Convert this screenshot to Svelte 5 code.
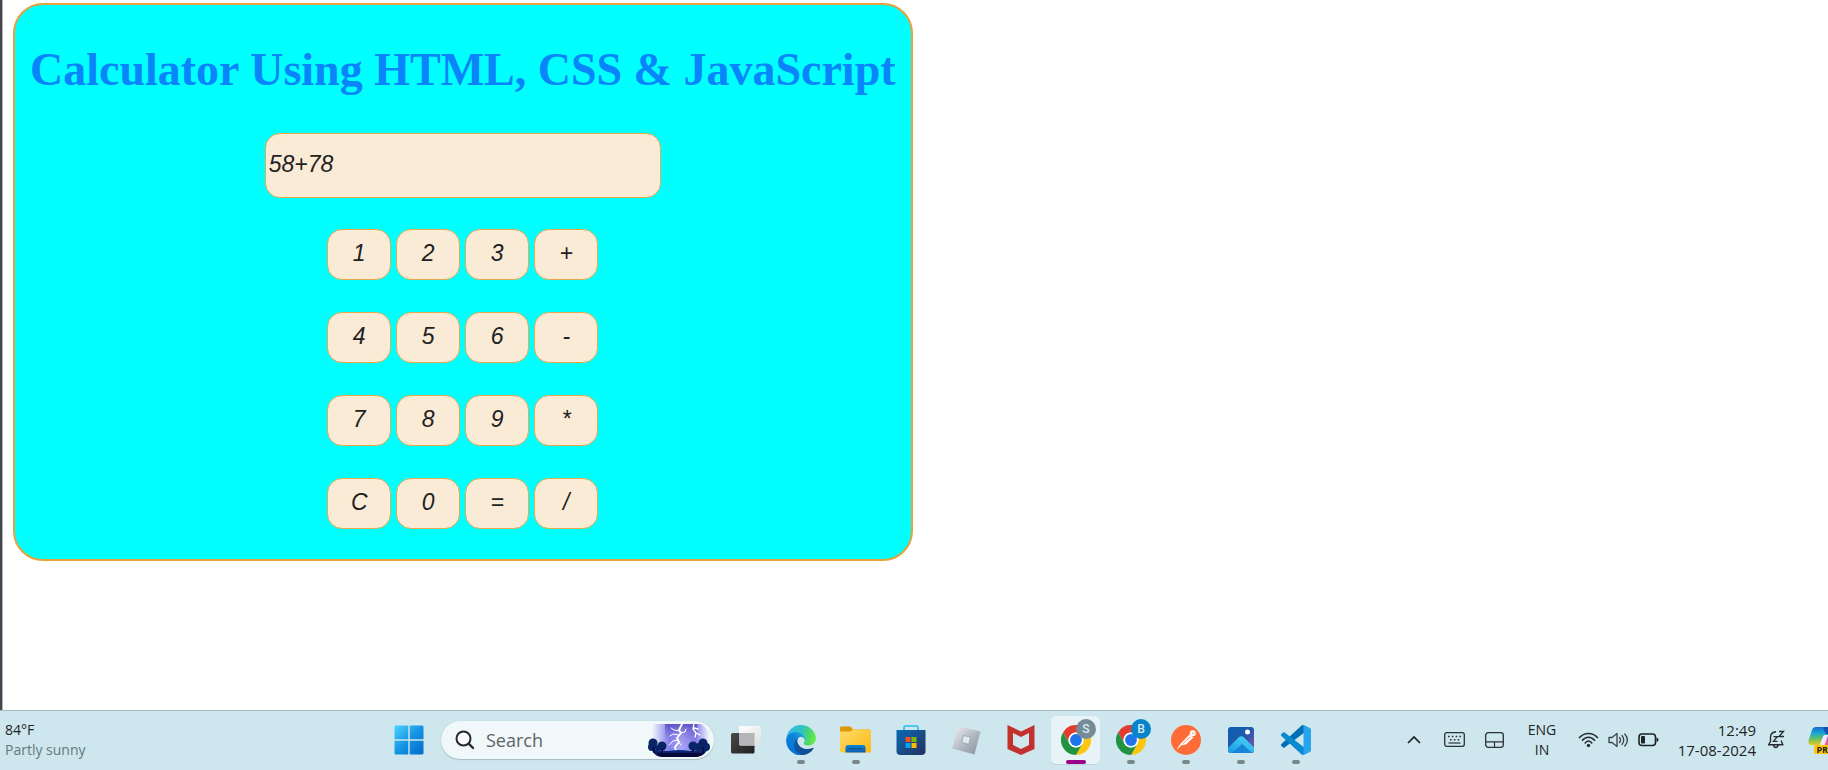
<script>
  const rows = [
    ['1', '2', '3', '+'],
    ['4', '5', '6', '-'],
    ['7', '8', '9', '*'],
    ['C', '0', '=', '/']
  ];

  let display = $state('58+78');

  // Evaluates + - * / with the usual precedence.
  function evaluate(text) {
    const tokens = text.match(/\d+\.?\d*|[-+*/]/g) ?? [];
    const terms = [];
    let op = '+';
    for (const token of tokens) {
      if (/^[-+*/]$/.test(token)) {
        op = token;
        continue;
      }
      const n = Number(token);
      if (op === '+') terms.push(n);
      else if (op === '-') terms.push(-n);
      else if (op === '*') terms.push((terms.pop() ?? 0) * n);
      else terms.push((terms.pop() ?? 0) / n);
    }
    return String(terms.reduce((a, b) => a + b, 0));
  }

  function press(key) {
    if (key === 'C') display = '';
    else if (key === '=') display = evaluate(display);
    else display += key;
  }
</script>

{#snippet chrome()}
  <svg width="30" height="30" viewBox="0 0 48 48" aria-hidden="true">
    <path fill="#e33b2e" d="M13.6 30 3.2 12A24 24 0 0 1 44.8 12H24A12 12 0 0 0 13.6 30z" />
    <path fill="#fcc60e" d="M34.4 30 24 48A24 24 0 0 0 44.8 12H24A12 12 0 0 1 34.4 30z" />
    <path fill="#229342" d="M13.6 30 3.2 12A24 24 0 0 0 24 48L34.4 30A12 12 0 0 1 13.6 30z" />
    <circle cx="24" cy="24" r="12" fill="#fff" />
    <circle cx="24" cy="24" r="9.5" fill="#1f74e9" />
  </svg>
{/snippet}

<div class="screen">
  <main>
    <section class="calculator">
      <h1>Calculator Using HTML, CSS &amp; JavaScript</h1>
      <input class="display" type="text" aria-label="Expression" bind:value={display} />
      <div class="keys">
        {#each rows as row}
          {#each row as key}
            <button type="button" class="key" onclick={() => press(key)}>{key}</button>
          {/each}
        {/each}
      </div>
    </section>
  </main>

  <footer class="taskbar">
    <div class="weather">
      <span>84°F</span>
      <span class="muted">Partly sunny</span>
    </div>

    <div class="apps">
      <button class="app" aria-label="Start">
        <svg width="30" height="30" viewBox="0 0 30 30" aria-hidden="true">
          <defs>
            <linearGradient id="win" x1="0" y1="0" x2="30" y2="30" gradientUnits="userSpaceOnUse">
              <stop offset="0" stop-color="#4fd4ff" />
              <stop offset=".5" stop-color="#1494e2" />
              <stop offset="1" stop-color="#0269cb" />
            </linearGradient>
          </defs>
          <path fill="url(#win)" d="M1.500 0.500H14.300V14.300H.500V1.500zM15.700.500H28.500L29.500 1.500V14.300H15.700zM.500 15.700H14.300V29.500H1.500L.500 28.500zM15.700 15.700H29.500V28.500L28.500 29.500H15.700z" />
        </svg>
      </button>

      <label class="search">
        <svg width="20" height="20" viewBox="0 0 20 20" aria-hidden="true">
          <circle cx="8.500" cy="8.500" r="7" fill="#fafcfd" stroke="#27292b" stroke-width="2" />
          <path d="M13.700 13.700 18 18" stroke="#27292b" stroke-width="2.400" stroke-linecap="round" />
        </svg>
        <input type="text" placeholder="Search" aria-label="Search" />
        <svg width="62" height="34" viewBox="0 0 62 34" aria-hidden="true">
          <defs>
            <linearGradient id="glow" x1="0" y1="0" x2="1" y2="0">
              <stop offset="0" stop-color="#8f88f0" stop-opacity="0" />
              <stop offset=".3" stop-color="#7f78ea" />
              <stop offset=".5" stop-color="#a9a6fa" />
              <stop offset=".75" stop-color="#7b72e6" />
              <stop offset="1" stop-color="#a7a6f4" stop-opacity="0" />
            </linearGradient>
            <linearGradient id="dusk" x1="0" y1="0" x2="0" y2="1">
              <stop offset="0" stop-color="#443bb5" stop-opacity=".7" />
              <stop offset="1" stop-color="#b9b8ff" stop-opacity=".1" />
            </linearGradient>
            <linearGradient id="ground" x1="0" y1="0" x2="0" y2="1">
              <stop offset="0" stop-color="#0b3690" />
              <stop offset="1" stop-color="#07073b" />
            </linearGradient>
          </defs>
          <path fill="url(#glow)" d="M4 1H53Q60 5 62 14V28H4z" />
          <path fill="url(#dusk)" d="M17 1H49V26H17z" />
          <g fill="none" stroke="#fff" stroke-linecap="round" stroke-linejoin="round">
            <path stroke-width="1.800" d="M34 1 31 7 33 10 29 15 31 19 27 24 28 28" />
            <path stroke-width="1" d="M32 8 26 7 23 5M31 12 25 11 22 13M32 10 37 9 38 6M30 17 25 18 21 22M30 18 33 22" />
            <path stroke-width="1.300" d="M46 1 45 6 48 10 47 14M48 10 52 12M46 5 50 6" />
          </g>
          <path fill="url(#ground)" d="M3 26Q12 28 21 28 31 26 42 28 52 27 60 26L58 29Q54 33 48 34H15Q8 34 5 29z" />
          <g fill="#082467">
            <circle cx="5" cy="20" r="4.500" /><circle cx="4" cy="24" r="4" />
            <circle cx="14" cy="23" r="4.500" /><circle cx="10" cy="25" r="3" />
            <circle cx="45" cy="23" r="4.500" /><circle cx="55" cy="20" r="4.500" />
            <circle cx="58" cy="24" r="4" /><circle cx="51" cy="24" r="4" />
          </g>
          <path stroke="#04083a" stroke-width="1.500" d="M6 24V30M14 26V31M45 26V31M55 24V31" />
          <path fill="#07083b" d="M9 30H57Q53 34 47 34H16Q11 33 9 30z" />
        </svg>
      </label>

      <button class="app" aria-label="Task view">
        <svg width="30" height="30" viewBox="0 0 30 30" aria-hidden="true">
          <defs>
            <linearGradient id="tvd" x1="0" y1="0" x2="1" y2="1"><stop stop-color="#4a4a4a" /><stop offset="1" stop-color="#202020" /></linearGradient>
            <linearGradient id="tvl" x1="0" y1="0" x2="1" y2="1"><stop stop-color="#fff" /><stop offset="1" stop-color="#dcdfe1" /></linearGradient>
          </defs>
          <rect x="0" y="8" width="23.500" height="20.500" rx="1.500" fill="url(#tvd)" />
          <rect x="8" y="1" width="22" height="19.500" rx="1.500" fill="url(#tvl)" />
          <path fill="#b4b5b6" d="M8 8H23.500V20.500H9.500L8 19z" />
        </svg>
      </button>

      <button class="app running" aria-label="Microsoft Edge">
        <svg width="30" height="30" viewBox="4.600 0 256 258" aria-hidden="true">
          <defs>
            <linearGradient id="e1" x1="63" y1="177" x2="241" y2="177" gradientUnits="userSpaceOnUse"><stop stop-color="#0c59a4" /><stop offset="1" stop-color="#114a8b" /></linearGradient>
            <linearGradient id="e2" x1="157" y1="90" x2="46" y2="220" gradientUnits="userSpaceOnUse"><stop stop-color="#1b9de2" /><stop offset=".4" stop-color="#0f80d7" /><stop offset="1" stop-color="#0078d4" /></linearGradient>
            <linearGradient id="e3" x1="20" y1="60" x2="250" y2="120" gradientUnits="userSpaceOnUse"><stop stop-color="#35b8e8" /><stop offset=".45" stop-color="#2dc3c4" /><stop offset=".8" stop-color="#4fd868" /><stop offset="1" stop-color="#66eb45" /></linearGradient>
          </defs>
          <path fill="url(#e1)" d="M235.680 195.460a93.730 93.730 0 0 1-10.540 4.710 101.870 101.870 0 0 1-35.900 6.460c-47.320 0-88.540-32.550-88.540-74.320A31.480 31.480 0 0 1 117.130 105c-42.800 1.800-53.800 46.400-53.800 72.530 0 73.880 68.090 81.370 82.760 81.370 7.910 0 19.840-2.300 27-4.560l1.310-.44a128.340 128.340 0 0 0 66.600-52.800 4 4 0 0 0-5.320-5.640z" />
          <path fill="url(#e2)" d="M110.340 246.340A79.200 79.200 0 0 1 87.600 225a80.720 80.720 0 0 1 29.530-120c3.120-1.470 8.450-4.130 15.540-4a32.350 32.350 0 0 1 25.690 13 31.880 31.880 0 0 1 6.360 18.660c0-.21 24.460-79.600-80-79.600-43.900 0-80 41.660-80 78.210a130.150 130.150 0 0 0 12.110 56 128 128 0 0 0 156.380 67.110 75.550 75.550 0 0 1-62.780-8z" />
          <path fill="url(#e3)" d="M156.940 153.870c-.81 1.050-3.300 2.500-3.300 5.660 0 2.610 1.700 5.120 4.720 7.230 14.380 10 41.490 8.680 41.560 8.680a59.560 59.560 0 0 0 30.270-8.350 61.380 61.380 0 0 0 30.430-52.880c.26-22.410-8-37.310-11.340-43.910C228.090 28.760 182.350.19 132.610.19a128 128 0 0 0-128 126.200c.48-36.540 36.800-66.050 80-66.050 3.500 0 23.460.34 42 10.070 16.340 8.580 24.900 18.940 30.850 29.210 6.180 10.670 7.280 24.150 7.280 29.520s-2.740 13.330-7.800 24.730z" />
        </svg>
      </button>

      <button class="app running" aria-label="File Explorer">
        <svg width="31" height="27" viewBox="0 0 31 27" aria-hidden="true">
          <defs>
            <linearGradient id="fold" x1="0" y1="0" x2="1" y2="1"><stop stop-color="#ffdb69" /><stop offset="1" stop-color="#fcb913" /></linearGradient>
            <linearGradient id="tray" x1="0" y1="0" x2="0" y2="1"><stop stop-color="#0b84d8" /><stop offset="1" stop-color="#0c5faf" /></linearGradient>
          </defs>
          <path fill="#dd9808" d="M0 8V1.500Q0 .500 1.500.500H10Q11 .500 13 3.500H29V8z" />
          <path fill="url(#fold)" d="M0 5.500H9.500Q11 5.500 13 3.500H29.500Q31 3.500 31 5V25Q31 26.500 29.500 26.500H1.500Q0 26.500 0 25z" />
          <path fill="url(#tray)" d="M5.500 26.500V21.500Q5.500 19 8 19H23Q25.500 19 25.500 21.500V26.500z" />
          <path stroke="#114c84" stroke-width="1" d="M9 22.700H22" />
        </svg>
      </button>

      <button class="app" aria-label="Microsoft Store">
        <svg width="30" height="30" viewBox="0 0 30 30" aria-hidden="true">
          <defs>
            <linearGradient id="bag" x1="0" y1="0" x2="1" y2="1"><stop stop-color="#0a6ab7" /><stop offset="1" stop-color="#25305e" /></linearGradient>
          </defs>
          <path fill="none" stroke="#27bff3" stroke-width="1.700" d="M8 6V2.500Q8 1 9.500 1H20.500Q22 1 22 2.500V6" />
          <path fill="url(#bag)" d="M.500 5H29.500V26Q29.500 30 25.500 30H4.500Q.500 30 .500 26z" />
          <path fill="#f25022" d="M9.500 12H14.500V17H9.500z" />
          <path fill="#7fba00" d="M15.500 12H20.500V17H15.500z" />
          <path fill="#00a4ef" d="M9.500 18H14.500V23H9.500z" />
          <path fill="#ffb900" d="M15.500 18H20.500V23H15.500z" />
        </svg>
      </button>

      <button class="app" aria-label="Roblox">
        <svg width="30" height="30" viewBox="0 0 30 30" aria-hidden="true">
          <defs>
            <linearGradient id="rbx" x1="0" y1="0" x2="1" y2="1"><stop stop-color="#f1f2f5" /><stop offset=".5" stop-color="#b6bcc5" /><stop offset="1" stop-color="#868e9b" /></linearGradient>
          </defs>
          <path fill="url(#rbx)" d="M7 1 29.500 6.500 23.500 29.500 1 23.500z" />
          <path fill="#dfe9f0" stroke="#8c98a4" stroke-width=".700" d="M12.500 10.500 19.500 12.300 17.800 19.300 10.800 17.500z" />
        </svg>
      </button>

      <button class="app" aria-label="McAfee">
        <svg width="28" height="30" viewBox="0 0 28 30" aria-hidden="true">
          <path fill="#c3312d" fill-rule="evenodd" d="M.500 0 14 6.500 27.500 0V24L14 30 .500 24zM6 8V20L14 24 22 20V8L14 12z" />
        </svg>
      </button>

      <button class="app active" aria-label="Chrome, profile S">
        {@render chrome()}
        <span class="badge grey">S</span>
      </button>

      <button class="app running" aria-label="Chrome, profile B">
        {@render chrome()}
        <span class="badge blue">B</span>
      </button>

      <button class="app running" aria-label="Postman">
        <svg width="30" height="30" viewBox="0 0 30 30" aria-hidden="true">
          <circle cx="15" cy="15" r="15" fill="#ff6c37" />
          <circle cx="21.800" cy="8.200" r="3" fill="#fff" />
          <path fill="#fff" d="M18.500 9.500 22.500 12.500 15 19.500 10.500 20.300 6.500 24 6 23.500 9.800 18.500z" />
          <path fill="none" stroke="#ff6c37" stroke-width=".8" d="M19 12 12 18.500M21 8.500 23.500 8" />
        </svg>
      </button>

      <button class="app running" aria-label="Photos">
        <svg width="26" height="26" viewBox="0 0 26 26" aria-hidden="true">
          <defs>
            <linearGradient id="ph" x1="0" y1="0" x2="1" y2="1"><stop stop-color="#0b5fb4" /><stop offset=".5" stop-color="#2159a9" /><stop offset="1" stop-color="#8d53b5" /></linearGradient>
            <linearGradient id="mt" x1="0" y1="1" x2="1" y2="0"><stop stop-color="#1696e4" /><stop offset="1" stop-color="#52dcf8" /></linearGradient>
            <clipPath id="phc"><rect width="26" height="26" rx="3" /></clipPath>
          </defs>
          <g clip-path="url(#phc)">
            <rect width="26" height="26" fill="url(#ph)" />
            <path fill="#1687d8" d="M5 26 13 17 27 24V27H5z" />
            <path fill="url(#mt)" d="M-1 22 10.500 10.500Q13.500 8 16 10.500L27 21.500V26L23 25 14 17 4 26H-1z" />
          </g>
          <circle cx="19.500" cy="5" r="2.500" fill="#fff" />
        </svg>
      </button>

      <button class="app running" aria-label="Visual Studio Code">
        <svg width="30" height="30" viewBox="0 0 100 100" aria-hidden="true">
          <path fill="#0070b3" d="M96.460 10.800 75.860.88C73.470-.27 70.620.21 68.750 2.080L1.300 63.580c-1.800 1.650-1.800 4.500 0 6.150l5.500 5c1.500 1.350 3.740 1.450 5.350.23L93.400 13.300c2.700-2.060 6.600-.13 6.600 3.280v-.24c0-2.400-1.380-4.580-3.540-5.540z" />
          <path fill="#0c8ad0" d="m96.460 89.200-20.600 9.920c-2.390 1.150-5.240.67-7.110-1.200L1.300 36.420c-1.800-1.650-1.800-4.500 0-6.150l5.500-5c1.500-1.350 3.740-1.450 5.350-.23L93.400 86.700c2.700 2.060 6.600.13 6.600-3.280v.24c0 2.400-1.380 4.580-3.540 5.540z" />
          <path fill="#26a5ee" d="M75.860 99.130c-2.390 1.150-5.240.66-7.110-1.210 2.310 2.300 6.250.67 6.250-2.590V4.670c0-3.260-3.940-4.890-6.250-2.590 1.870-1.870 4.720-2.360 7.110-1.210l20.600 9.910C98.620 11.820 100 14 100 16.410v67.180c0 2.400-1.380 4.590-3.540 5.630z" />
        </svg>
      </button>
    </div>

    <div class="tray">
      <button class="icon" aria-label="Show hidden icons">
        <svg width="14" height="9" viewBox="0 0 14 9" aria-hidden="true"><path d="M1 8 7 2 13 8" fill="none" stroke="#1d2224" stroke-width="1.700" /></svg>
      </button>
      <button class="icon" aria-label="Touch keyboard">
        <svg width="21" height="15" viewBox="0 0 21 15" aria-hidden="true">
          <rect x=".700" y=".700" width="19.600" height="13.600" rx="2" fill="none" stroke="#2b3235" stroke-width="1.300" />
          <path stroke="#2b3235" stroke-width="1.600" stroke-dasharray="1.600 2.200" d="M4 4.500H17.500M6 7.800H16" />
          <path stroke="#2b3235" stroke-width="1.200" d="M4.500 11H16.500" />
        </svg>
      </button>
      <button class="icon" aria-label="Virtual touchpad">
        <svg width="19" height="16" viewBox="0 0 19 16" aria-hidden="true">
          <rect x=".700" y=".700" width="17.600" height="14.600" rx="2.500" fill="none" stroke="#2b3235" stroke-width="1.300" />
          <path stroke="#2b3235" stroke-width="1.200" d="M1 9.800H18M9.500 9.800V15" />
        </svg>
      </button>
      <button class="language"><span>ENG</span><span>IN</span></button>
      <button class="status" aria-label="Network, volume and battery">
        <svg width="21" height="16" viewBox="0 0 21 16" aria-hidden="true">
          <g fill="none" stroke="#262d30" stroke-width="1.500">
            <path d="M1 6Q5 1.500 10.500 1.500T20 6" /><path d="M4 8.800Q7 5.300 10.500 5.300T17 8.800" /><path d="M6.800 11.500Q8.500 9 10.500 9T14.200 11.500" />
          </g>
          <circle cx="10.500" cy="13.500" r="1.700" fill="#262d30" />
        </svg>
        <svg width="21" height="16" viewBox="0 0 21 16" aria-hidden="true">
          <g fill="none" stroke="#3a4245" stroke-width="1.300" stroke-linejoin="round" stroke-linecap="round">
            <path d="M1 5.500H4L9 1.500V14.500L4 10.500H1z" /><path d="M11.500 5.500Q13.500 8 11.500 10.500M14 3.500Q17.500 8 14 12.500M16.800 2Q22 8 16.800 14" />
          </g>
        </svg>
        <svg width="21" height="14" viewBox="0 0 21 14" aria-hidden="true">
          <rect x="1" y="1" width="16.500" height="11.500" rx="3" fill="none" stroke="#1d2224" stroke-width="1.600" />
          <rect x="3" y="3" width="4" height="7.500" rx="1" fill="#1d2224" />
          <path fill="#1d2224" d="M18.500 4.500Q20.500 5 20.500 6.800T18.500 9z" />
        </svg>
      </button>
      <button class="clock"><span>12:49</span><span>17-08-2024</span></button>
      <button class="icon" aria-label="Notifications silenced">
        <svg width="18" height="19" viewBox="0 0 18 19" aria-hidden="true">
          <path fill="none" stroke="#262d30" stroke-width="1.400" stroke-linejoin="round" d="M9 1.700Q3.500 2 3.500 7.500V11.500L1.500 14.800H16L14.500 12V10.500M6.500 15Q7 17.500 8.800 17.500T11.200 15" />
          <path fill="none" stroke="#262d30" stroke-width="1.300" d="M6.500 6.700H10.300L6.500 11.300H10.500M12 1.500H16.500L12 6.500H17" />
        </svg>
      </button>
      <button class="copilot" aria-label="Copilot preview">
        <svg width="20" height="26" viewBox="0 0 20 26" aria-hidden="true">
          <defs>
            <linearGradient id="cp" x1="0" y1="0" x2="0" y2="1"><stop stop-color="#1468d3" /><stop offset=".35" stop-color="#19a9d4" /><stop offset=".65" stop-color="#62c063" /><stop offset="1" stop-color="#e9cb1c" /></linearGradient>
            <linearGradient id="cq" x1="0" y1="0" x2="0" y2="1"><stop stop-color="#b678ec" /><stop offset=".5" stop-color="#ef5a9c" /><stop offset="1" stop-color="#f7864a" /></linearGradient>
          </defs>
          <path fill="url(#cp)" d="M8 0H20V8H18Q15 8 14 12L12 18H4Q-1 18 1 12L4 3Q5 0 8 0z" />
          <path fill="#174fae" d="M15 0H20V7H18Q16 4 15 0z" />
          <path fill="url(#cq)" d="M18 8H20V24H12Q15 22 18 8z" />
          <path fill="#f3e7fa" d="M16 8H20L16 20H11z" />
        </svg>
        <span class="pre">PR</span>
      </button>
    </div>
  </footer>
</div>

<style>
  :global(body) {
    margin: 0;
    overflow: hidden;
  }
  .screen {
    display: flex;
    flex-direction: column;
    min-height: 100vh;
    background: #fff;
  }
  main {
    flex: 1;
    padding: 3px 13px;
    background: linear-gradient(to right, #45464f 0 2px, #b4b5b9 2px 3px, #fff 3px);
  }
  .calculator {
    display: flex;
    flex-direction: column;
    align-items: center;
    box-sizing: border-box;
    width: fit-content;
    padding: 37px 15px 30px;
    border: 2px solid #e6a23a;
    border-radius: 30px;
    background: #0ff;
  }
  h1 {
    margin: 0 0 35px;
    font: bold 46px/56px "Liberation Serif", "Times New Roman", serif;
    color: #0a84fa;
    white-space: nowrap;
  }
  .display {
    box-sizing: border-box;
    width: 396px;
    height: 65px;
    margin-bottom: 31px;
    padding: 0 3px 2px;
    border: 1px solid #e6a94c;
    border-radius: 15px;
    background: #faebd7;
    color: #222;
    font: italic 23px "Liberation Sans", Arial, sans-serif;
    outline: none;
  }
  .keys {
    display: grid;
    grid-template-columns: repeat(4, 64px);
    gap: 32px 5px;
  }
  .key {
    box-sizing: border-box;
    height: 51px;
    padding: 0 0 2px;
    border: 1px solid #e6a94c;
    border-radius: 15px;
    background: #faebd7;
    color: #222;
    font: italic 23px "Liberation Sans", Arial, sans-serif;
  }
  .taskbar {
    display: grid;
    grid-template-columns: 381fr auto 505fr;
    align-items: center;
    box-sizing: border-box;
    height: 60px;
    padding-bottom: 2px;
    border-top: 1px solid #a9b7c0;
    background: #cee7ee;
    color: #1d2426;
    font: 14px/20px "Open Sans", "Segoe UI", sans-serif;
    overflow: hidden;
  }
  .taskbar button {
    padding: 0;
    border: 0;
    background: none;
    color: inherit;
    font: inherit;
  }
  .weather {
    display: flex;
    flex-direction: column;
    padding-left: 5px;
  }
  .muted {
    color: #687779;
  }
  .apps {
    display: flex;
    align-items: center;
  }
  .app {
    position: relative;
    display: flex;
    align-items: center;
    justify-content: center;
    width: 55px;
    height: 57px;
  }
  .app::before {
    content: "";
    position: absolute;
    inset: 5px 3px 4px;
    border-radius: 5px;
  }
  .app.active::before {
    background: #e8f3f8;
    box-shadow: 0 1px 1px #bfd3da;
  }
  .app svg {
    position: relative;
  }
  .running::after,
  .active::after {
    content: "";
    position: absolute;
    bottom: 4px;
    width: 8px;
    height: 4px;
    border-radius: 2px;
    background: #7a8789;
  }
  .active::after {
    width: 20px;
    background: #9a008c;
  }
  .badge {
    position: absolute;
    top: 8px;
    left: 28px;
    width: 20px;
    border-radius: 50%;
    color: #dceaf0;
    font: 500 12px/20px Roboto, sans-serif;
    text-align: center;
  }
  .grey {
    background: #758c98;
  }
  .blue {
    background: #0583cb;
  }
  .search {
    display: flex;
    align-items: center;
    gap: 11px;
    box-sizing: border-box;
    width: 273px;
    height: 38px;
    margin: 0 4px 0 5px;
    padding: 0 4px 0 14px;
    border-radius: 19px;
    background: #f0f8fa;
    box-shadow: 0 0 1px #a8bcc3, 0 1px 1px #a8bcc3;
  }
  .search input {
    flex: 1;
    min-width: 0;
    padding: 0;
    border: 0;
    background: none;
    font: 18px/24px "Open Sans", "Segoe UI", sans-serif;
    outline: none;
  }
  .search input::placeholder {
    color: #5d6466;
    opacity: 1;
  }
  .tray {
    display: flex;
    align-items: center;
    justify-content: flex-end;
  }
  .icon {
    display: flex;
    align-items: center;
    justify-content: center;
    width: 40px;
    height: 40px;
  }
  .language {
    display: flex;
    flex-direction: column;
    align-items: center;
    width: 56px;
  }
  .status {
    display: flex;
    align-items: center;
    gap: 9px;
    margin: 0 8px;
  }
  .taskbar .clock {
    display: flex;
    flex-direction: column;
    align-items: flex-end;
    width: 89px;
    font-size: 15px;
  }
  .copilot {
    position: relative;
    width: 20px;
    height: 28px;
    margin-left: 12px;
  }
  .copilot svg {
    display: block;
  }
  .pre {
    position: absolute;
    right: 0;
    bottom: 0;
    padding-left: 2px;
    border-radius: 2px 0 0 2px;
    background: #fdc40c;
    color: #222;
    font: bold 9px/9px "Open Sans", sans-serif;
  }
</style>
